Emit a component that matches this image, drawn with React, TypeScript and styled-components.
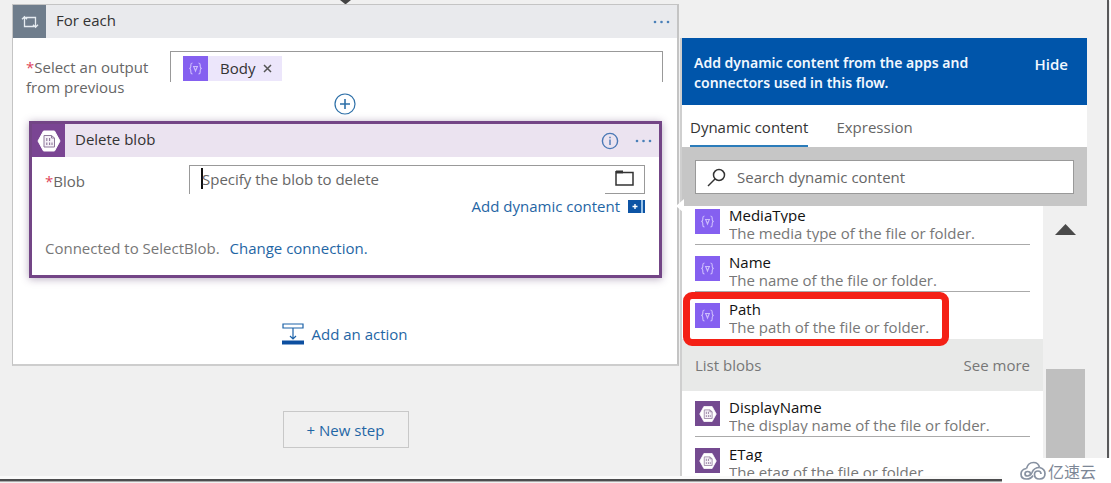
import React from 'react';
import styled, { createGlobalStyle } from 'styled-components';

const Global = createGlobalStyle`
  * { box-sizing: border-box; }
  body { margin: 0; background: #fff; font-family: "Open Sans", "Noto Sans CJK SC", sans-serif; font-size: 15px; line-height: 20px; color: #333; }
  button, input { font: inherit; color: inherit; background: none; border: 0; padding: 0; margin: 0; }
  p, h1, h2, h3, ul { margin: 0; padding: 0; font: inherit; list-style: none; }
  a { color: #1f66a5; text-decoration: none; }
`;

const Page = styled.div`
  position: relative;
  height: 100vh;
  padding: 0 2px 2px 0;
`;
const Frame = styled.main`
  display: flex;
  align-items: flex-start;
  height: 100%;
  overflow: hidden;
  background: linear-gradient(#fafafa, #fafafa) bottom / 100% 3px no-repeat #f0f0f0;
  border-right: 2px solid #58585a;
  border-bottom: 2px solid #4c4c4e;
  box-shadow: 0 1px 1px #aaa;
`;
const FlowColumn = styled.section`
  position: relative;
  flex: 1;
  min-width: 0;
  padding: 4px 1px 0 12px;
  display: flex;
  flex-direction: column;
  align-items: center;
`;
const Arrow = styled.svg`
  position: absolute;
  top: 0;
  left: 50%;
`;
const Scope = styled.section`
  width: 100%;
  height: 362px;
  background: #fff;
  border: 1px solid #c4c4c4;
  border-right: 2px solid #c4c4c4;
  border-bottom: 2px solid #cdcdcd;
`;
const CardHeader = styled.header<{ $bg: string }>`
  display: flex;
  align-items: center;
  gap: 16px;
  height: 33px;
  padding-right: 6px;
  background: ${p => p.$bg};
  color: #333;
`;
const HeaderIcon = styled.span<{ $bg: string }>`
  display: flex;
  align-items: center;
  justify-content: center;
  flex: none;
  width: 33px;
  height: 33px;
  background: ${p => p.$bg};
`;
const HeaderTitle = styled.h2`
  flex: 1;
  margin-left: -6px;
  padding-bottom: 3px;
`;
const IconButton = styled.button`
  display: flex;
  align-items: center;
  justify-content: center;
  flex: none;
`;
const Field = styled.div<{ $pad: string }>`
  display: flex;
  align-items: flex-start;
  padding: ${p => p.$pad};
`;
const FieldLabel = styled.label`
  flex: none;
  width: 144px;
  padding-top: 6px;
  color: #666;
`;
const Required = styled.span`
  color: #e0455a;
`;
const TokenBox = styled.div`
  flex: 1;
  height: 31px;
  padding: 4px 12px;
  border: 1px solid #999;
  border-bottom: 0;
`;
const Token = styled.span`
  display: inline-flex;
  align-items: center;
  height: 25px;
  padding-right: 10px;
  background: #ece6fb;
`;
const TokenText = styled.span`
  margin: 0 8px 0 12px;
  padding-bottom: 2px;
`;
const PlusRow = styled.div`
  display: flex;
  justify-content: center;
  height: 22px;
  margin-top: -4px;
`;
const ActionCard = styled.section`
  height: 157px;
  margin: 6px 15px 0 16px;
  border: 3px solid #734586;
  background: #fff;
  box-shadow: 0 1px 8px rgba(80, 50, 100, 0.4);
`;
const BlobBox = styled.div`
  display: flex;
  flex: 1;
  height: 29px;
  border: 1px solid #999;
  border-bottom: 0;
`;
const BlobInput = styled.input`
  flex: 1;
  min-width: 0;
  padding-left: 11px;
  padding-bottom: 2px;
  outline: none;
  &::placeholder { color: #666; opacity: 1; }
`;
const Caret = styled.span`
  width: 2px;
  height: 21px;
  margin: 2px -12px 0 11px;
  background: #111;
`;
const FolderButton = styled(IconButton)`
  width: 39px;
  padding-bottom: 3px;
  border-bottom: 1px solid #999;
`;
const DynamicLink = styled.a`
  display: flex;
  align-items: center;
  justify-content: flex-end;
  gap: 8px;
  padding: 2px 14px 0 0;
`;
const Connection = styled.p`
  padding: 22px 13px 0;
  color: #777;
  a { margin-left: 6px; }
`;
const AddAction = styled.a`
  display: flex;
  align-items: center;
  justify-content: center;
  gap: 7px;
  margin-top: 45px;
`;
const NewStep = styled.button`
  width: 126px;
  height: 37px;
  margin-top: 45px;
  border: 1px solid #c8c8c8;
  color: #1f66a5;
`;
const Panel = styled.aside`
  position: relative;
  display: flex;
  flex-direction: column;
  flex: none;
  width: 407px;
  height: calc(100vh - 45px);
  margin: 38px 20px 0 0;
  border-left: 2px solid #cfcfcf;
  background: #fff;
`;
const Callout = styled.svg`
  position: absolute;
  left: -6px;
  top: 161px;
`;
const Banner = styled.header`
  display: flex;
  justify-content: space-between;
  height: 67px;
  padding: 15px 19px 0 12px;
  background: #0055aa;
  color: #f2f8ff;
  font-weight: 600;
`;
const BannerText = styled.p`
  width: 300px;
  font-family: "Noto Sans", "Open Sans", sans-serif;
  font-size: 14px;
`;
const HideButton = styled.button`
  height: 22px;
`;
const Tabs = styled.div`
  display: flex;
  gap: 28px;
  height: 42px;
  padding-left: 8px;
`;
const Tab = styled.button<{ $active?: boolean }>`
  padding-top: 3px;
  color: ${p => (p.$active ? '#333' : '#666')};
  border-bottom: 2px solid ${p => (p.$active ? '#2b7cba' : 'transparent')};
`;
const SearchArea = styled.div`
  padding: 13px 13px 12px;
  background: #c6c6c6;
`;
const SearchBox = styled.label`
  display: flex;
  align-items: center;
  gap: 11px;
  height: 34px;
  padding-left: 11px;
  border: 1px solid #999;
  background: #fff;
`;
const SearchInput = styled.input`
  flex: 1;
  outline: none;
  &::placeholder { color: #666; opacity: 1; }
`;
const Results = styled.div`
  display: flex;
  flex: 1;
  min-height: 0;
`;
const List = styled.div`
  flex: 1;
  min-width: 0;
  overflow: hidden;
`;
const Items = styled.ul<{ $top: number }>`
  padding: ${p => p.$top}px 13px 0;
`;
const Item = styled.li`
  display: flex;
  gap: 9px;
  height: 47px;
  &:not(:last-child) { background: linear-gradient(#aaa, #aaa) 0 35px / 100% 1px no-repeat; }
  &:last-child { height: 36px; }
`;
const ItemTile = styled.span<{ $bg: string }>`
  display: flex;
  align-items: center;
  justify-content: center;
  flex: none;
  width: 25px;
  height: 25px;
  background: ${p => p.$bg};
`;
const ItemName = styled.h3`
  height: 14px;
  overflow: hidden;
  line-height: 13px;
  color: #111;
`;
const ItemNote = styled.p`
  height: 17px;
  margin-top: 2px;
  overflow: hidden;
  line-height: 17px;
  color: #777;
`;
const Group = styled.header`
  display: flex;
  align-items: center;
  justify-content: space-between;
  height: 52px;
  padding: 0 13px;
  background: #e8e9e8;
  color: #777;
`;
const SeeMore = styled.a`
  color: #777;
`;
const Rail = styled.div`
  width: 44px;
  padding: 18px 2px 0;
  background: #f0f0f0;
  display: flex;
  flex-direction: column;
  align-items: center;
`;
const Thumb = styled.div`
  flex: 1;
  width: 39px;
  margin-top: 134px;
  background: #bfbfbf;
`;
const Highlight = styled.div`
  position: absolute;
  left: 1px;
  top: 254px;
  width: 266px;
  height: 54px;
  border: 7px solid #f42015;
  border-radius: 9px;
`;
const Watermark = styled.div`
  position: absolute;
  right: 0;
  bottom: 0;
  display: flex;
  align-items: center;
  gap: 2px;
  width: 109px;
  height: 25px;
  padding-left: 18px;
  background: #fff;
  color: #7d8796;
  font-family: "Noto Sans CJK SC", sans-serif;
  font-size: 16px;
`;

const Dots = () => (
  <svg width="18" height="4" fill="#4a80b8"><circle cx="2" cy="2" r="1.3" /><circle cx="8.5" cy="2" r="1.3" /><circle cx="15" cy="2" r="1.3" /></svg>
);
const VariableIcon = () => (
  <svg width="15" height="13" viewBox="0 0 15 13" fill="none" stroke="#cdbdfc" strokeWidth="1.1">
    <path d="M4.500 1Q2.800 1 2.800 3V4.500Q2.800 6.500 1.200 6.500Q2.800 6.500 2.800 8.500V10Q2.800 12 4.500 12M10.500 1Q12.200 1 12.200 3V4.500Q12.200 6.500 13.800 6.500Q12.200 6.500 12.200 8.500V10Q12.200 12 10.500 12M5 4.500H10M5.700 4.500L7.500 9L9.300 4.500" />
  </svg>
);
const BlobIcon = ({ size }: { size: number }) => (
  <svg width={size} height={size} viewBox="0 0 24 24">
    <path d="M6.500 2H17.500L23 12L17.500 22H6.500L1 12Z" fill="#fff" stroke="#fff" strokeWidth="1" strokeLinejoin="round" />
    <path d="M7 6.500H14.500L17.500 9V18H7ZM14.500 6.500V9H17.500" fill="#f5f0f7" stroke="#8d7899" strokeWidth="1" />
    <path d="M9.800 9V12M12.600 9V12M9.800 13.500V16M12.600 13.500V16M15 13.500V16" stroke="#8d7899" strokeWidth="1.1" />
  </svg>
);

type Entry = { name: string; note: string };
const fileFields: Entry[] = [
  { name: 'MediaType', note: 'The media type of the file or folder.' },
  { name: 'Name', note: 'The name of the file or folder.' },
  { name: 'Path', note: 'The path of the file or folder.' },
];
const blobFields: Entry[] = [
  { name: 'DisplayName', note: 'The display name of the file or folder.' },
  { name: 'ETag', note: 'The etag of the file or folder.' },
];

const EntryRow = ({ entry, blob }: { entry: Entry; blob?: boolean }) => (
  <Item>
    <ItemTile $bg={blob ? '#744a90' : '#8560f0'}>{blob ? <BlobIcon size={18} /> : <VariableIcon />}</ItemTile>
    <div>
      <ItemName>{entry.name}</ItemName>
      <ItemNote>{entry.note}</ItemNote>
    </div>
  </Item>
);

export default function App() {
  return (
    <Page>
      <Global />
      <Frame>
        <FlowColumn>
          <Arrow width="12" height="4"><path d="M0 0H11L6 4H5Z" fill="#444" /></Arrow>
          <Scope>
            <CardHeader $bg="#e9eaed">
              <HeaderIcon $bg="#6f7d8c">
                <svg width="18" height="14" viewBox="0 0 18 14" fill="none" stroke="#e6ecf1" strokeWidth="1.3">
                  <path d="M5 2.500H14.500V12M13 11.500H3.500V2M1 4.200L3.500 1.700L6 4.200M12 9.800L14.500 12.300L17 9.800" />
                </svg>
              </HeaderIcon>
              <HeaderTitle>For each</HeaderTitle>
              <IconButton aria-label="For each menu"><Dots /></IconButton>
            </CardHeader>
            <Field $pad="13px 14px 0 13px">
              <FieldLabel as="div"><Required>*</Required>Select an output from previous</FieldLabel>
              <TokenBox>
                <Token>
                  <ItemTile $bg="#8560f0"><VariableIcon /></ItemTile>
                  <TokenText>Body</TokenText>
                  <IconButton aria-label="Remove Body">
                    <svg width="9" height="9" stroke="#555" strokeWidth="1.5"><path d="M1 1L8 8M8 1L1 8" /></svg>
                  </IconButton>
                </Token>
              </TokenBox>
            </Field>
            <PlusRow>
              <IconButton aria-label="Insert a step">
                <svg width="22" height="22" fill="none" stroke="#2e70a8"><circle cx="11" cy="11" r="10" strokeWidth="1.2" /><path d="M11 6V16M6 11H16" strokeWidth="1.6" /></svg>
              </IconButton>
            </PlusRow>
            <ActionCard>
              <CardHeader $bg="#ebe3f0">
                <HeaderIcon $bg="#7a4593"><BlobIcon size={24} /></HeaderIcon>
                <HeaderTitle>Delete blob</HeaderTitle>
                <IconButton aria-label="About this action">
                  <svg width="18" height="18" fill="none" stroke="#4a78b5"><circle cx="9" cy="9" r="7.6" strokeWidth="1.4" /><path d="M9 7.500V13M9 4.800V6.200" strokeWidth="1.4" /></svg>
                </IconButton>
                <IconButton aria-label="Delete blob menu"><Dots /></IconButton>
              </CardHeader>
              <Field $pad="8px 14px 0 13px">
                <FieldLabel htmlFor="blob"><Required>*</Required>Blob</FieldLabel>
                <BlobBox>
                  <Caret />
                  <BlobInput id="blob" placeholder="Specify the blob to delete" />
                  <FolderButton aria-label="Browse blobs">
                    <svg width="19" height="16" fill="none" stroke="#333" strokeWidth="1.5"><path d="M1 1V15H18V2.500H8" /><path d="M1 2H8" strokeWidth="3" /></svg>
                  </FolderButton>
                </BlobBox>
              </Field>
              <DynamicLink href="#">
                Add dynamic content
                <svg width="17" height="13"><path d="M0 0H13V13H0ZM15 0H17V13H15Z" fill="#0d54a5" /><path d="M13 0H15V13H13Z" fill="#9cc4e8" /><path d="M7 4V9M4.500 6.500H9.500" stroke="#fff" strokeWidth="1.4" /></svg>
              </DynamicLink>
              <Connection>Connected to SelectBlob. <a href="#">Change connection.</a></Connection>
            </ActionCard>
            <AddAction href="#">
              <svg width="22" height="22" fill="none" stroke="#1c62a8" strokeWidth="1.2"><path d="M1 1H21V5H1ZM11 5V16M8 13L11 16L14 13" /><path d="M0 19.500H22" stroke="#0d4fa0" strokeWidth="4" /></svg>
              Add an action
            </AddAction>
          </Scope>
          <NewStep>+ New step</NewStep>
        </FlowColumn>
        <Panel>
          <Banner>
            <BannerText>Add dynamic content from the apps and connectors used in this flow.</BannerText>
            <HideButton>Hide</HideButton>
          </Banner>
          <Tabs>
            <Tab $active>Dynamic content</Tab>
            <Tab>Expression</Tab>
          </Tabs>
          <SearchArea>
            <SearchBox>
              <svg width="19" height="19" fill="none" stroke="#333" strokeWidth="1.5"><circle cx="12" cy="7" r="5.5" /><path d="M8 11L1 18" /></svg>
              <SearchInput aria-label="Search dynamic content" placeholder="Search dynamic content" />
            </SearchBox>
          </SearchArea>
          <Results>
            <List>
              <Items $top={3}>{fileFields.map(e => <EntryRow key={e.name} entry={e} />)}</Items>
              <Group><span>List blobs</span><SeeMore href="#">See more</SeeMore></Group>
              <Items $top={10}>{blobFields.map(e => <EntryRow key={e.name} entry={e} blob />)}</Items>
            </List>
            <Rail>
              <svg width="21" height="11"><path d="M0 11L10.500 0L21 11Z" fill="#4a4a4a" /></svg>
              <Thumb />
            </Rail>
          </Results>
          <Callout width="8" height="14"><path d="M8 0L0 7L8 14Z" fill="#fff" /></Callout>
          <Highlight />
        </Panel>
      </Frame>
      <Watermark>
        <svg width="26" height="20" viewBox="0 0 26 20" fill="none" stroke="#8791a1" strokeWidth="1.7">
          <path d="M6.500 7.500Q8 1.500 13.500 1.500Q18.500 1.500 19.500 6.500" />
          <path d="M19.500 6.500Q25 8 25 12.500Q25 18 19.500 18Q14.500 18 14.500 13.500Q14.500 10 18 10Q21 10 21 13" />
          <path d="M10.500 13Q10.500 10.500 7.500 10.500Q5 10.500 5 13Q5 15 7.500 15Q10.500 15 12 11.500Q14 6.500 19.500 6.500" />
          <path d="M6.500 7.500Q1 8.500 1 13Q1 18 6.500 18Q11 18 13 14.500" />
        </svg>
        亿速云
      </Watermark>
    </Page>
  );
}
